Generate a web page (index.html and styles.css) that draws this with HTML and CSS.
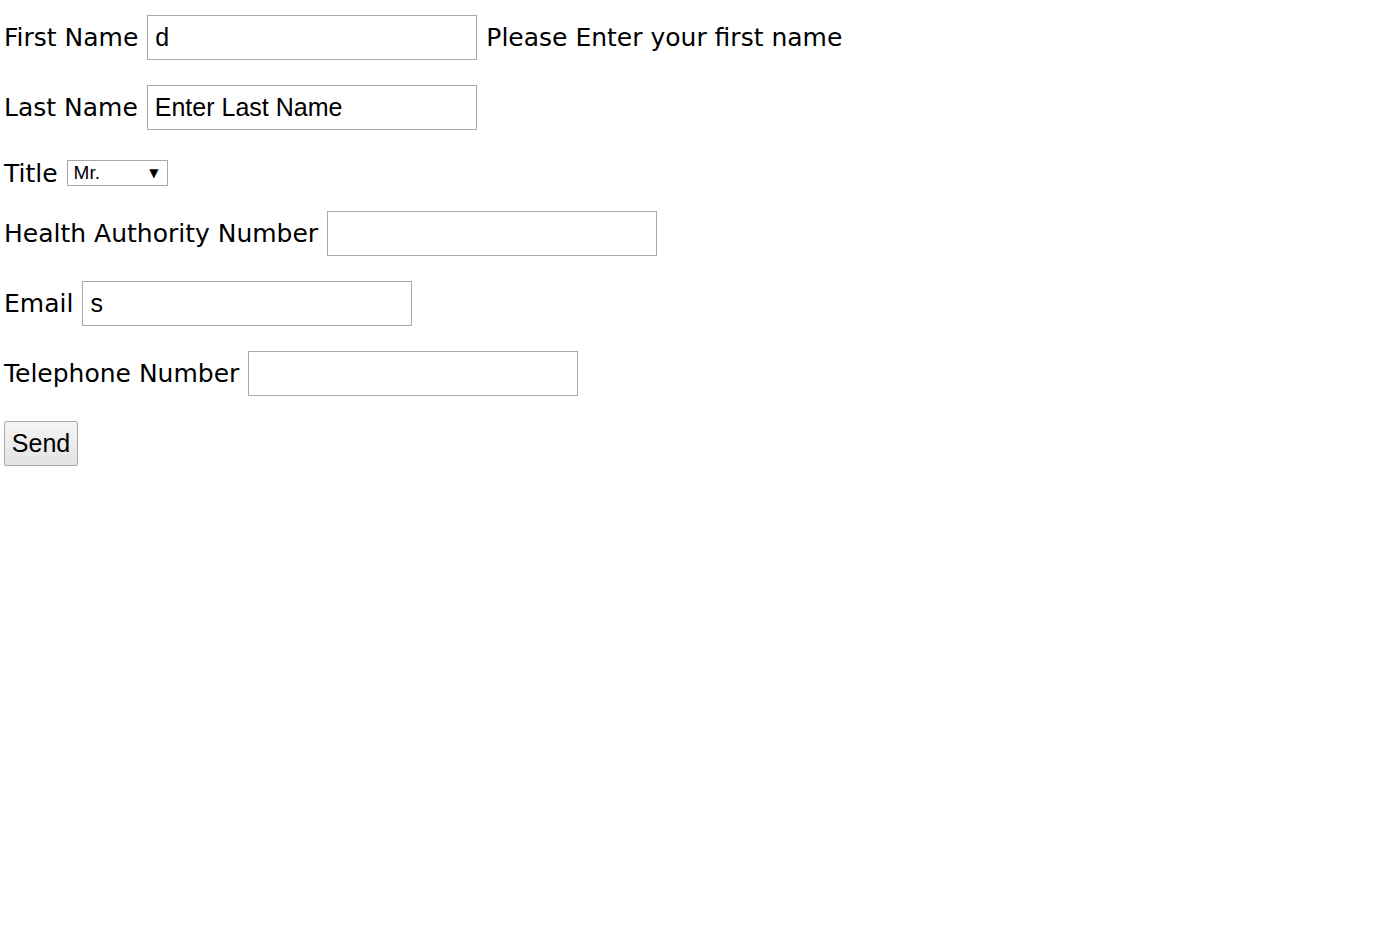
FILE: index.html
```
<!DOCTYPE html>
<html>
<head>
<meta charset="utf-8">
<link rel="stylesheet" href="styles.css">
</head>
<body>
<form class="form">
  <div class="row r1">
    <label class="lbl">First Name</label>
    <input class="field" type="text" value="d">
    <span class="lbl msg">Please Enter your first name</span>
  </div>
  <div class="row r2">
    <label class="lbl">Last Name</label>
    <input class="field" type="text" placeholder="Enter Last Name">
  </div>
  <div class="row r3">
    <label class="lbl">Title</label>
    <div class="select"><span>Mr.</span><span class="arrow">▼</span></div>
  </div>
  <div class="row r4">
    <label class="lbl">Health Authority Number</label>
    <input class="field" type="text">
  </div>
  <div class="row r5">
    <label class="lbl">Email</label>
    <input class="field" type="text" value="s">
  </div>
  <div class="row r6">
    <label class="lbl">Telephone Number</label>
    <input class="field" type="text">
  </div>
  <div class="row r7">
    <button class="send" type="button">Send</button>
  </div>
</form>
</body>
</html>
```
FILE: styles.css
```
html, body { margin: 0; padding: 0; background: #fff; }
body { padding: 15px 4px 0 4px; }
.form { display: flex; flex-direction: column; gap: 25px; }
.row { display: flex; align-items: center; gap: 9px; height: 45px; }
.r3 { height: 26px; margin-top: 5px; }
.lbl { font-family: "DejaVu Sans", Verdana, sans-serif; font-size: 25px; color: #000; }
.field {
  box-sizing: border-box; width: 330px; height: 45px; margin: 0;
  border: 1px solid #a9a9a9; padding: 0 7px;
  font-family: "Liberation Sans", Arial, sans-serif; font-size: 25px; color: #000;
  outline: none;
}
.field::placeholder { color: #000; opacity: 1; }
.select {
  box-sizing: border-box; width: 101px; height: 26px;
  border: 1px solid #a9a9a9; display: flex; align-items: center; justify-content: space-between;
  padding: 0 8px 0 6px;
  font-family: "Liberation Sans", Arial, sans-serif; font-size: 19px; color: #000;
}
.arrow { font-size: 12px; font-family: "DejaVu Sans", sans-serif; }
.send {
  box-sizing: border-box; width: 74px; height: 45px; margin: 0;
  border: 1px solid #a9a9a9; border-radius: 2px;
  background: linear-gradient(#f5f5f5, #e3e3e3);
  font-family: "Liberation Sans", Arial, sans-serif; font-size: 25px; color: #000; padding: 0;
}
```
